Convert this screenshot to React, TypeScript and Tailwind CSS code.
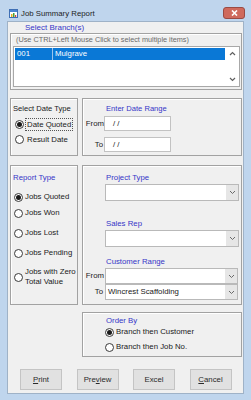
import React from "react";

const FONT = { fontFamily: '"Liberation Sans", Arial, sans-serif' };

function Radio({ checked }: { checked?: boolean }) {
  return (
    <span className="w-[9px] h-[9px] shrink-0 rounded-full border border-[#3a3a3a] bg-white flex items-center justify-center">
      {checked && <span className="w-[5px] h-[5px] rounded-full bg-[#1a1a1a]" />}
    </span>
  );
}

function Chevron() {
  return (
    <svg width="7" height="5" viewBox="0 0 7 5">
      <path d="M1 1 L3.5 3.5 L6 1" fill="none" stroke="#6a6a6a" strokeWidth="1" />
    </svg>
  );
}

function Dropdown({ value, w = 134, h = 17 }: { value?: string; w?: number; h?: number }) {
  return (
    <div
      className="bg-white border border-[#b9b9b9] flex items-stretch"
      style={{ width: w, height: h }}
    >
      <div className="flex-1 pl-[2px] text-[7.8px] leading-[14px] text-[#1a1a1a] overflow-hidden whitespace-nowrap flex items-center">
        {value}
      </div>
      <div className="w-[12px] bg-[#e6e6e6] flex items-center justify-center">
        <Chevron />
      </div>
    </div>
  );
}

function Group({ className, children }: { className: string; children?: React.ReactNode }) {
  return (
    <div className={"border border-[#a2a2a2] shadow-[inset_1px_1px_0_#ffffff] flex flex-col " + className}>
      {children}
    </div>
  );
}

export default function App() {
  return (
    <div className="w-[251px] h-[400px] bg-[#bfd5ed] flex flex-col whitespace-nowrap" style={FONT}>
      {/* Title bar */}
      <div className="h-[21px] flex items-start">
        <svg className="ml-[9px] mt-[9px]" width="9" height="9" viewBox="0 0 9 9">
          <rect x="0.5" y="0.5" width="8" height="8" fill="#ffffff" stroke="#3f6fb5" />
          <rect x="1" y="1" width="7" height="2" fill="#4a86d0" />
          <rect x="2" y="5" width="1.5" height="3" fill="#e0b020" />
          <rect x="4" y="4" width="1.5" height="4" fill="#40a040" />
          <rect x="6" y="6" width="1.2" height="2" fill="#d04040" />
        </svg>
        <span className="ml-[3px] mt-[8px] text-[7.8px] leading-[11px] text-[#1e1e1e]">Job Summary Report</span>
        <div className="ml-auto mr-[6px] mt-[7px] w-[22px] h-[12px] rounded-[3px] border border-[#9a4b44] bg-[#cf6a5d] flex items-center justify-center">
          <svg width="7" height="6" viewBox="0 0 7 6">
            <path d="M1 0.5 L6 5.5 M6 0.5 L1 5.5" stroke="#ffffff" strokeWidth="1.6" />
          </svg>
        </div>
      </div>

      {/* Client area */}
      <div className="mx-[7px] h-[373px] bg-[#f0f0f0] border border-[#9fb2c7] flex flex-col">
        <div className="ml-[17px] mt-[1px] text-[8px] leading-[10px] text-[#3636c8]">Select Branch(s)</div>

        <Group className="ml-[2px] w-[232px] h-[57px]">
          <div className="ml-[5px] mt-[1px] text-[7.3px] leading-[9px] text-[#6a6a6a]">
            (Use CTRL+Left Mouse Click to select multiple items)
          </div>
          <div className="ml-[2px] mt-[2px] w-[227px] h-[41px] bg-white border border-[#a8a8a8] flex">
            <div className="flex-1 pt-[1px] pl-[1px]">
              <div className="h-[12px] w-[210px] bg-[#0a78d6] flex items-center text-white text-[7.8px]">
                <span className="ml-[2px] w-[35px]">001</span>
                <span className="w-[1px] h-[12px] bg-[#9cc4ec]" />
                <span className="ml-[2px]">Mulgrave</span>
              </div>
            </div>
            <div className="w-[13px] flex flex-col items-center justify-between py-[4px]">
              <svg width="7" height="5" viewBox="0 0 7 5">
                <path d="M1 4 L3.5 1.5 L6 4" fill="none" stroke="#606060" strokeWidth="1.2" />
              </svg>
              <svg width="7" height="5" viewBox="0 0 7 5">
                <path d="M1 1 L3.5 3.5 L6 1" fill="none" stroke="#606060" strokeWidth="1.2" />
              </svg>
            </div>
          </div>
        </Group>

        {/* Row 2 */}
        <div className="ml-[2px] mt-[8px] flex gap-[4px]">
          <Group className="w-[68px] h-[58px]">
            <div className="ml-[2px] mt-[5px] text-[7.6px] leading-[10px] text-[#1a1a1a]">Select Date Type</div>
            <div className="mt-[4px] ml-[4px] h-[13px] flex items-center">
              <Radio checked />
              <span className="ml-[1px] px-[1px] h-[13px] border border-dotted border-[#555] text-[7.8px] leading-[11px] text-[#1a1a1a]">
                Date Quoted
              </span>
            </div>
            <div className="mt-[2px] ml-[4px] h-[13px] flex items-center">
              <Radio />
              <span className="ml-[3px] text-[7.8px] text-[#1a1a1a]">Result Date</span>
            </div>
          </Group>
          <Group className="w-[160px] h-[58px]">
            <div className="ml-[23px] mt-[5px] text-[7.6px] leading-[10px] text-[#3636c8]">Enter Date Range</div>
            <div className="mt-[2px] flex items-center">
              <span className="w-[21px] text-right text-[7.8px] text-[#1a1a1a]">From</span>
              <div className="w-[67px] h-[15px] bg-white border border-[#c2c2c2] pl-[8px] text-[7.8px] leading-[13px] text-[#1a1a1a]">/ /</div>
            </div>
            <div className="mt-[6px] flex items-center">
              <span className="w-[21px] text-right pr-[1px] text-[7.8px] text-[#1a1a1a]">To</span>
              <div className="w-[67px] h-[15px] bg-white border border-[#c2c2c2] pl-[8px] text-[7.8px] leading-[13px] text-[#1a1a1a]">/ /</div>
            </div>
          </Group>
        </div>

        {/* Row 3 */}
        <div className="ml-[2px] mt-[9px] flex gap-[4px]">
          <Group className="w-[68px] h-[140px]">
            <div className="ml-[2px] mt-[7px] text-[7.8px] leading-[10px] text-[#3636c8]">Report Type</div>
            <div className="mt-[8px] ml-[3px] h-[12px] flex items-center">
              <Radio checked />
              <span className="ml-[2px] text-[7.8px] text-[#1a1a1a]">Jobs Quoted</span>
            </div>
            <div className="mt-[4px] ml-[3px] h-[12px] flex items-center">
              <Radio />
              <span className="ml-[2px] text-[7.8px] text-[#1a1a1a]">Jobs Won</span>
            </div>
            <div className="mt-[8px] ml-[3px] h-[12px] flex items-center">
              <Radio />
              <span className="ml-[2px] text-[7.8px] text-[#1a1a1a]">Jobs Lost</span>
            </div>
            <div className="mt-[8px] ml-[3px] h-[12px] flex items-center">
              <Radio />
              <span className="ml-[2px] text-[7.8px] text-[#1a1a1a]">Jobs Pending</span>
            </div>
            <div className="mt-[8px] ml-[3px] flex items-center">
              <Radio />
              <span className="ml-[2px] text-[7.8px] leading-[10px] text-[#1a1a1a]">
                Jobs with Zero
                <br />
                Total Value
              </span>
            </div>
          </Group>
          <Group className="w-[160px] h-[140px]">
            <div className="ml-[23px] mt-[7px] text-[7.8px] leading-[10px] text-[#3636c8]">Project Type</div>
            <div className="ml-[22px] mt-[1px]">
              <Dropdown />
            </div>
            <div className="ml-[23px] mt-[18px] text-[7.8px] leading-[10px] text-[#3636c8]">Sales Rep</div>
            <div className="ml-[22px] mt-[1px]">
              <Dropdown />
            </div>
            <div className="ml-[23px] mt-[10px] text-[7.8px] leading-[10px] text-[#3636c8]">Customer Range</div>
            <div className="mt-[1px] flex items-center">
              <span className="w-[22px] text-right pr-[1px] text-[7.8px] text-[#1a1a1a]">From</span>
              <Dropdown w={133} h={16} />
            </div>
            <div className="flex items-center">
              <span className="w-[22px] text-right pr-[2px] text-[7.8px] text-[#1a1a1a]">To</span>
              <Dropdown w={133} h={16} value="Wincrest Scaffolding" />
            </div>
          </Group>
        </div>

        {/* Row 4 */}
        <Group className="ml-[74px] mt-[7px] w-[160px] h-[45px]">
          <div className="ml-[23px] mt-[3px] text-[7.8px] leading-[10px] text-[#3636c8]">Order By</div>
          <div className="ml-[22px] h-[12px] flex items-center">
            <Radio checked />
            <span className="ml-[2px] text-[7.8px] text-[#1a1a1a]">Branch then Customer</span>
          </div>
          <div className="ml-[22px] mt-[3px] h-[12px] flex items-center">
            <Radio />
            <span className="ml-[2px] text-[7.8px] text-[#1a1a1a]">Branch then Job No.</span>
          </div>
        </Group>

        {/* Buttons */}
        <div className="ml-[12px] mt-[12px] flex gap-[14.5px]">
          <button className="w-[42px] h-[21px] bg-[#e1e1e1] border border-[#c4c4c4] text-[7.8px] text-[#2a2a2a]">
            <span className="underline">P</span>rint
          </button>
          <button className="w-[42px] h-[21px] bg-[#e1e1e1] border border-[#c4c4c4] text-[7.8px] text-[#2a2a2a]">
            Pre<span className="underline">v</span>iew
          </button>
          <button className="w-[42px] h-[21px] bg-[#e1e1e1] border border-[#c4c4c4] text-[7.8px] text-[#2a2a2a]">
            Excel
          </button>
          <button className="w-[42px] h-[21px] bg-[#e1e1e1] border border-[#c4c4c4] text-[7.8px] text-[#2a2a2a]">
            <span className="underline">C</span>ancel
          </button>
        </div>
      </div>
    </div>
  );
}
